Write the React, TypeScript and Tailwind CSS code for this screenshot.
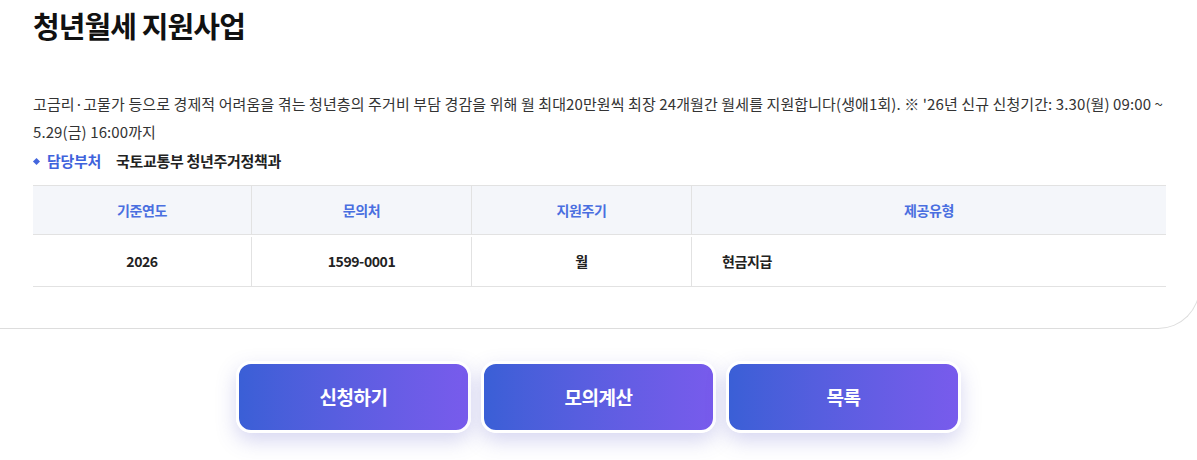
import React from "react";

const font = { fontFamily: '"Noto Sans CJK KR", "Noto Sans", sans-serif' };

export default function App() {
  return (
    <div className="w-[1197px] h-[460px] overflow-hidden bg-white text-[#222]" style={font}>
      <div className="w-[1200px] border-b border-r border-[#dddddd] rounded-br-[42px] bg-white pl-[33px] pr-[34px] pt-[5px] pb-[41px]">
        <h1 className="text-[29px] font-bold leading-[40px] tracking-[-0.9px] text-[#111]">청년월세 지원사업</h1>
        <p className="mt-[45px] text-[15px] leading-[28px] tracking-[0.1px] text-[#333] w-[1150px]">
          고금리·고물가 등으로 경제적 어려움을 겪는 청년층의 주거비 부담 경감을 위해 월 최대20만원씩 최장 24개월간 월세를 지원합니다(생애1회). ※ '26년 신규 신청기간: 3.30(월) 09:00 ~
          <br />
          5.29(금) 16:00까지
        </p>
        <div className="mt-[2px] flex items-center h-[26px] text-[15px] tracking-[-0.3px]">
          <span className="ml-[1px] w-[5px] h-[5px] bg-[#4466dd] rotate-45"></span>
          <span className="ml-[8px] font-bold text-[#3f63dc]">담당부처</span>
          <span className="ml-[15px] font-bold text-[#222]">국토교통부 청년주거정책과</span>
        </div>
        <div className="mt-[11px] w-[1133px]">
          <div className="grid grid-cols-[219px_220px_220px_1fr] border-t border-b border-[#e2e2e2] bg-[#f4f6fa] h-[50px] text-[14px] font-bold text-[#4a6fe0] tracking-[-0.4px]">
            <div className="flex items-center justify-center border-r border-[#e2e2e2]">기준연도</div>
            <div className="flex items-center justify-center border-r border-[#e2e2e2]">문의처</div>
            <div className="flex items-center justify-center border-r border-[#e2e2e2]">지원주기</div>
            <div className="flex items-center justify-center">제공유형</div>
          </div>
          <div className="grid grid-cols-[219px_220px_220px_1fr] border-b border-[#e2e2e2] h-[52px] text-[14px] font-semibold text-[#222] tracking-[-0.4px]">
            <div className="flex items-center justify-center border-r border-[#e2e2e2] mt-[2px]">2026</div>
            <div className="flex items-center justify-center border-r border-[#e2e2e2] mt-[2px]">1599-0001</div>
            <div className="flex items-center justify-center border-r border-[#e2e2e2] mt-[2px]">월</div>
            <div className="flex items-center pl-[30px] mt-[2px]">현금지급</div>
          </div>
        </div>
      </div>
      <div className="mt-[32px] flex justify-center gap-[10px]">
        {["신청하기", "모의계산", "목록"].map((t) => (
          <button
            key={t}
            className="w-[235px] h-[72px] rounded-[15px] border-[3px] border-white bg-gradient-to-r from-[#3a5fd6] to-[#785bec] text-white text-[19px] font-bold tracking-[-0.5px] shadow-[0_8px_20px_rgba(90,90,200,0.25)]"
          >
            {t}
          </button>
        ))}
      </div>
    </div>
  );
}
